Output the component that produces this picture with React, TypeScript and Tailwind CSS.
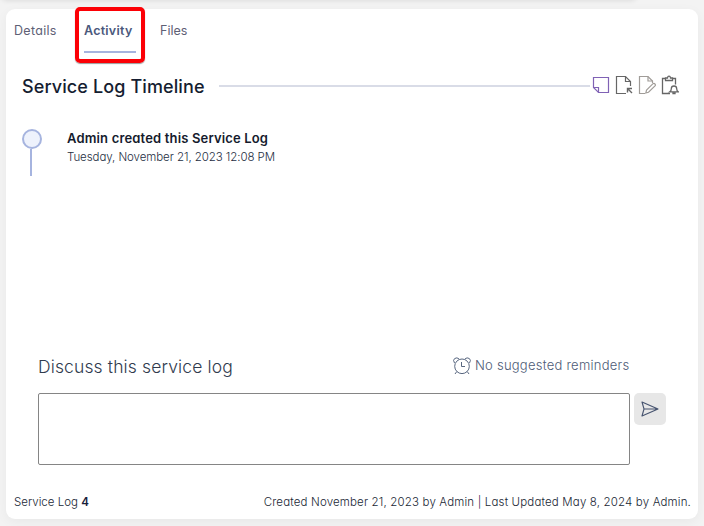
import React from "react";

function NoteIcon() {
  return (
    <svg className="h-[18px] w-[18px]" viewBox="0 0 18 18" fill="none" stroke="#8062b5" strokeWidth="1.2">
      <path d="M1.5 1.5H16.5V16.5H6.5L1.5 11.5Z" />
      <path d="M1.5 11.5H6.5V16.5" />
    </svg>
  );
}

function FileArrowIcon() {
  return (
    <svg className="h-5 w-[18px]" viewBox="0 0 18 20" fill="none" stroke="#666666" strokeWidth="1.2">
      <path d="M11 18.5H1.5V1.5H10.5L15.5 6.5V11" />
      <path d="M10.5 1.5V6.5H15.5" />
      <path d="M17 18L12.5 13.5M12.5 17.5V13.5H17" strokeWidth="1.4" />
    </svg>
  );
}

function FilePencilIcon() {
  return (
    <svg className="h-5 w-[18px]" viewBox="0 0 18 20" fill="none" stroke="#a09c98" strokeWidth="1.2">
      <path d="M7 18.5H1.5V1.5H10L14.5 6V8" />
      <path d="M10 1.5V6H14.5" />
      <path d="M8.5 15.2L15 8.7Q16 8 17 9Q17.8 10 17 10.9L10.5 17.3L7.8 18Z" />
    </svg>
  );
}

function ClipboardBellIcon() {
  return (
    <svg className="h-5 w-[18px]" viewBox="0 0 18 20" fill="none" stroke="#666666" strokeWidth="1.3">
      <path d="M9 18.5H1.5V3.5H4.5M11.5 3.5H14.5V9.5" />
      <path d="M4.5 5.5V3H6.5Q6.7 1.2 8 1.2T9.5 3H11.5V5.5Z" />
      <path d="M8.8 16.8Q10.3 15.8 10.3 13.8Q10.3 11 13 11T15.7 13.8Q15.7 15.8 17.2 16.8ZM12 17V18.5H14V17" />
    </svg>
  );
}

function AlarmIcon() {
  return (
    <svg className="h-[18px] w-[18px]" viewBox="0 0 18 18" fill="none" stroke="#596780" strokeWidth="1">
      <circle cx="9" cy="9.3" r="7.3" />
      <path d="M1.5 6Q-.5 3 1.7 1.5Q4 0 6 1.9M16.5 6Q18.5 3 16.3 1.5Q14 0 12 1.9M3.8 14.5L2 17M14.2 14.5L16 17M8.5 5V9.5H12" />
    </svg>
  );
}

function SendIcon() {
  return (
    <svg className="h-4 w-[18px]" viewBox="0 0 18 16" fill="none" stroke="#46536f" strokeWidth="1.1" strokeLinejoin="round">
      <path d="M1 1L17 8L1 15L3 8ZM3 8H17" />
    </svg>
  );
}

export default function App() {
  return (
    <div className="relative h-[526px] w-[704px] overflow-hidden bg-[#f3f3f3] pt-[9px] pl-[6px] font-['Inter',sans-serif] [font-feature-settings:'cv11']">
      <div className="absolute -top-[18px] left-0 h-[18px] w-[638px] rounded-lg shadow-[0_1px_5px_#00000018]" />
      <main className="flex h-[510px] w-[692px] flex-col rounded-[9px] bg-white whitespace-nowrap shadow-[0_3px_12px_#0000000c]">
        <nav className="relative flex h-[56px] pt-[12px] pl-2 text-[12.5px] leading-[20px] text-[#5e6075]">
          <button className="h-5 w-[70px] text-left font-[380] tracking-[0.3px]">Details</button>
          <button className="h-[32px] w-[52px] border-b-2 border-[#a6b4df] text-left leading-[20px] font-semibold tracking-[0.25px] text-[#4a587c]">
            <span className="block h-[30px]">Activity</span>
          </button>
          <button className="ml-6 h-5 text-left font-[380]">Files</button>
          <div className="absolute -top-[2px] left-[69px] h-[56px] w-[70px] rounded-[5px] border-4 border-[#fc0006] shadow-[0_1px_1px_#00000066]" />
        </nav>

        <header className="mt-[9px] flex h-[24px] items-center pl-4">
          <h1 className="w-[197px] pt-[2px] text-[18px] leading-6 font-[460] tracking-[0.11px] text-[#151d31]">Service Log Timeline</h1>
          <div className="h-[2px] w-[371px] bg-[#d9dce7]" />
          <div className="mb-[2px] ml-[2px] flex items-center gap-[5px]">
            <NoteIcon />
            <FileArrowIcon />
            <FilePencilIcon />
            <ClipboardBellIcon />
          </div>
        </header>

        <section className="mt-[31px] flex h-[48px] pl-4">
          <div className="flex w-5 flex-col items-center">
            <div className="h-5 w-5 shrink-0 rounded-full border-2 border-[#a6b4df] bg-[#eef2fc]" />
            <div className="mr-[2px] h-[27px] w-[2px] bg-[#a6b4df]" />
          </div>
          <div className="ml-[25px] -mt-px">
            <h2 className="text-[13px] leading-[20px] font-semibold tracking-[0.16px] text-[#151b2d]">Admin created this Service Log</h2>
            <p className="text-[11.5px] leading-[18px] font-[360] tracking-[-0.07px] text-[#252e42]">Tuesday, November 21, 2023 12:08 PM</p>
          </div>
        </section>

        <section className="mt-[177px] pl-8">
          <div className="flex h-[24px] w-[592px] items-center justify-between">
            <h3 className="pt-px text-[17.5px] leading-6 font-light tracking-[0.13px] text-[#303b4e]">Discuss this service log</h3>
            <div className="flex w-[177px] items-center gap-1 text-[13px] font-[360] tracking-[0.24px] text-[#4e5b76]">
              <AlarmIcon />
              <span>No suggested reminders</span>
            </div>
          </div>
          <div className="mt-[15px] flex items-start gap-1">
            <textarea className="block h-[72px] w-[592px] resize-none rounded-[2px] border border-[#858585] bg-white outline-none" />
            <button className="flex h-8 w-8 items-center justify-center rounded-[5px] bg-[#e7e7e7]">
              <SendIcon />
            </button>
          </div>
        </section>

        <footer className="mt-[28px] flex h-[18px] justify-between pr-[7px] pl-2 text-[11.5px] leading-[18px] font-[360] text-[#202735]">
          <span>Service Log <strong className="font-semibold text-[#17213c]">4</strong></span>
          <span className="tracking-[0.16px]">Created November 21, 2023 by Admin <span className="text-[#35134c]">|</span> Last Updated May 8, 2024 by Admin.</span>
        </footer>
      </main>
    </div>
  );
}
